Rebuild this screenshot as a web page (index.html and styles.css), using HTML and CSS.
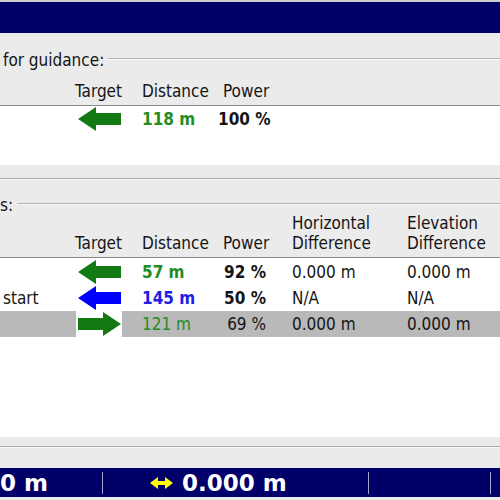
FILE: index.html
```html
<!DOCTYPE html>
<html>
<head>
    <meta charset="utf-8">
    <link rel="stylesheet" href="styles.css">
</head>
<body>
    <div class="topline"></div>
    <div class="titlebar"></div>

    <div class="legend legend-1">for guidance:</div>
    <div class="row head head-1">
        <div></div>
        <div class="target">Target</div>
        <div class="dist">Distance</div>
        <div class="pow-h">Power</div>
        <div></div>
        <div></div>
    </div>
    <div class="list list-1">
        <div class="row item">
            <div></div>
            <div class="target">
                <svg class="arrow" viewBox="0 0 43 24"><polygon class="fill-green" points="0,12 18,0 18,6 43,6 43,18 18,18 18,24"/></svg>
            </div>
            <div class="dist b green">118 m</div>
            <div class="pow b">100 %</div>
            <div></div>
            <div></div>
        </div>
    </div>

    <div class="divider divider-1"></div>

    <div class="legend legend-2">s:</div>
    <div class="row head head-2">
        <div></div>
        <div class="target">Target</div>
        <div class="dist">Distance</div>
        <div class="pow-h">Power</div>
        <div class="horiz">Horizontal<br>Difference</div>
        <div class="elev">Elevation<br>Difference</div>
    </div>
    <div class="list list-2">
        <div class="row item">
            <div></div>
            <div class="target">
                <svg class="arrow" viewBox="0 0 43 24"><polygon class="fill-green" points="0,12 18,0 18,6 43,6 43,18 18,18 18,24"/></svg>
            </div>
            <div class="dist b green">57 m</div>
            <div class="pow b">92 %</div>
            <div class="horiz">0.000 m</div>
            <div class="elev">0.000 m</div>
        </div>
        <div class="row item">
            <div class="name">start</div>
            <div class="target">
                <svg class="arrow" viewBox="0 0 43 24"><polygon class="fill-blue" points="0,12 18,0 18,6 43,6 43,18 18,18 18,24"/></svg>
            </div>
            <div class="dist b blue">145 m</div>
            <div class="pow b">50 %</div>
            <div class="horiz">N/A</div>
            <div class="elev">N/A</div>
        </div>
        <div class="row item sel">
            <div></div>
            <div class="target">
                <svg class="arrow" viewBox="0 0 43 24"><polygon class="fill-green" points="43,12 25,0 25,6 0,6 0,18 25,18 25,24"/></svg>
            </div>
            <div class="dist green">121 m</div>
            <div class="pow">69 %</div>
            <div class="horiz">0.000 m</div>
            <div class="elev">0.000 m</div>
        </div>
    </div>

    <div class="divider divider-2"></div>

    <div class="status">
        <div class="cell cell-1">0 m</div>
        <div class="sep"></div>
        <div class="cell cell-2">
            <svg class="dbl" viewBox="0 0 23 12"><polygon points="0,6 8,0 8,4 15,4 15,0 23,6 15,12 15,8 8,8 8,12"/></svg>
            0.000 m
        </div>
        <div class="sep"></div>
        <div class="cell cell-3"></div>
        <div class="sep"></div>
    </div>
</body>
</html>
```

FILE: styles.css
```css
body, html {
    margin: 0;
    padding: 0;
    width: 500px;
    height: 500px;
    overflow: hidden;
}
body {
    background: #ebebeb;
    font-family: "DejaVu Sans Condensed", "DejaVu Sans", sans-serif;
    font-size: 17px;
    color: #151515;
}
.topline {
    height: 2px;
    background: #cdcdcd;
}
.titlebar {
    height: 31px;
    background: #000068;
}

/* group box captions with the etched rule after them */
.legend {
    display: flex;
    align-items: center;
    height: 16px;
    line-height: 16px;
    white-space: nowrap;
}
.legend::after {
    content: "";
    flex: 1;
    margin: -3px 0 0 4px;
    border-top: 1px solid #b2b2b2;
    border-bottom: 1px solid #fbfbfb;
}
.legend-1 {
    margin-top: 19px;
    padding-left: 3px;
}
.legend-2 {
    margin-top: 17px;
}

.row {
    display: grid;
    grid-template-columns: 76px 46px 96px 70px 116px 96px;
}
.head {
    align-items: end;
    line-height: 20px;
    padding-bottom: 4px;
    border-bottom: 1px solid #8a8a8a;
}
.head-1 {
    padding-top: 13px;
}
.head .target {
    margin-left: -1px;
}

.list {
    background: #fff;
    box-sizing: border-box;
}
.list-1 {
    height: 59px;
}
.list-2 {
    height: 179px;
    padding-top: 1px;
}
.item {
    height: 26px;
    align-items: center;
    white-space: nowrap;
}
.item.sel {
    background: #b9b9b9;
}
.item.sel .target {
    background: #fff;
    align-self: stretch;
    display: flex;
    align-items: center;
}

.name {
    padding-left: 3px;
}
.dist {
    padding-left: 20px;
}
.pow-h {
    padding-left: 5px;
}
.pow {
    text-align: right;
    padding-right: 22px;
}
.horiz {
    padding-left: 4px;
}
.elev {
    padding-left: 3px;
}

.arrow {
    display: block;
    width: 43px;
    height: 24px;
    margin-left: 2px;
}
.fill-green {
    fill: #137a13;
}
.fill-blue {
    fill: #0000ff;
}
.b {
    font-weight: bold;
}
.green {
    color: #248c24;
}
.blue {
    color: #1c1ce6;
}

.divider {
    border-top: 1px solid #a9a9a9;
    border-bottom: 1px solid #fafafa;
}
.divider-1 {
    margin-top: 13px;
}
.divider-2 {
    margin-top: 9px;
    margin-bottom: 20px;
}

/* status bar */
.status {
    display: flex;
    align-items: center;
    height: 29px;
    background: #000068;
    color: #fff;
    font-family: "DejaVu Sans", sans-serif;
    font-weight: bold;
    font-size: 23px;
    white-space: nowrap;
}
.cell {
    display: flex;
    align-items: center;
    height: 29px;
    overflow: hidden;
}
.cell-1 {
    width: 102px;
}
.cell-2 {
    width: 265px;
    box-sizing: border-box;
    padding-left: 47px;
}
.cell-3 {
    width: 121px;
}
.sep {
    width: 1px;
    height: 22px;
    background: #a4a4cc;
}
.dbl {
    width: 23px;
    height: 12px;
    margin-right: 9px;
    fill: #ffff00;
}
```
